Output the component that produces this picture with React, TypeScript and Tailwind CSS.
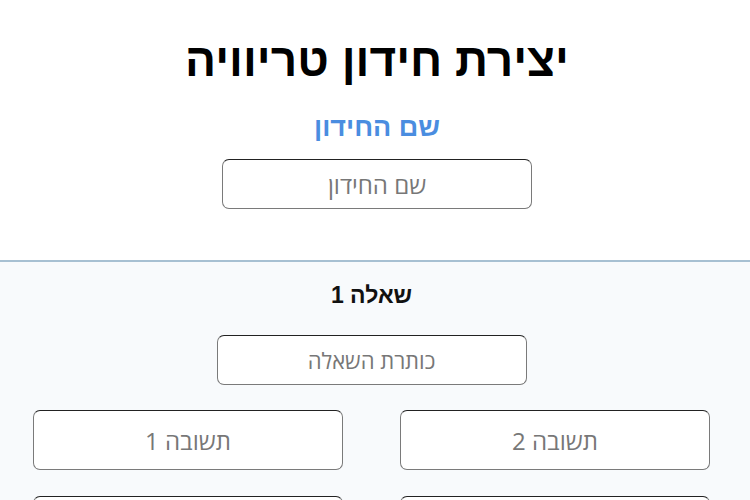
import React from "react";

const inputCls =
  "w-[310px] rounded-[7px] border border-[#7a7a7a] border-t-[#222] bg-white text-center text-[#333] placeholder:text-[#777] outline-none";

const phFont = { fontFamily: '"Open Sans", "DejaVu Sans", sans-serif' };

export default function App() {
  const answers = ["תשובה 2", "תשובה 1", "תשובה 4", "תשובה 3"];
  return (
    <div
      dir="rtl"
      className="min-h-[500px] w-[750px] overflow-hidden bg-white"
      style={{ fontFamily: '"Liberation Sans", Arial, sans-serif' }}
    >
      <div className="flex flex-col items-center pt-[34px] pl-[4px]">
        <h1 className="text-[46px] font-bold leading-[52px] text-black">יצירת חידון טריוויה</h1>
        <h2 className="mt-[25px] text-[27px] font-bold leading-[32px] text-[#4a8de0]">שם החידון</h2>
        <input className={inputCls + " mt-[16px] h-[50px] text-[24px]"} style={phFont} placeholder="שם החידון" />
      </div>
      <div className="mt-[51px] border-t-2 border-[#a7c0d2] bg-[#f8fafc] pb-[40px]">
        <div className="flex flex-col items-center pr-[40px] pl-[33px]">
          <h3 className="mt-[19px] text-[23px] font-bold leading-[28px] text-[#111]">שאלה 1</h3>
          <input className={inputCls + " mt-[26px] h-[50px] text-[22px]"} style={phFont} placeholder="כותרת השאלה" />
          <div className="mt-[25px] grid w-full grid-cols-2 gap-x-[57px] gap-y-[26px]">
            {answers.map((p, i) => (
              <input key={i} className={inputCls + " h-[60px] text-[24px]"} style={phFont} placeholder={p} />
            ))}
          </div>
        </div>
      </div>
    </div>
  );
}
